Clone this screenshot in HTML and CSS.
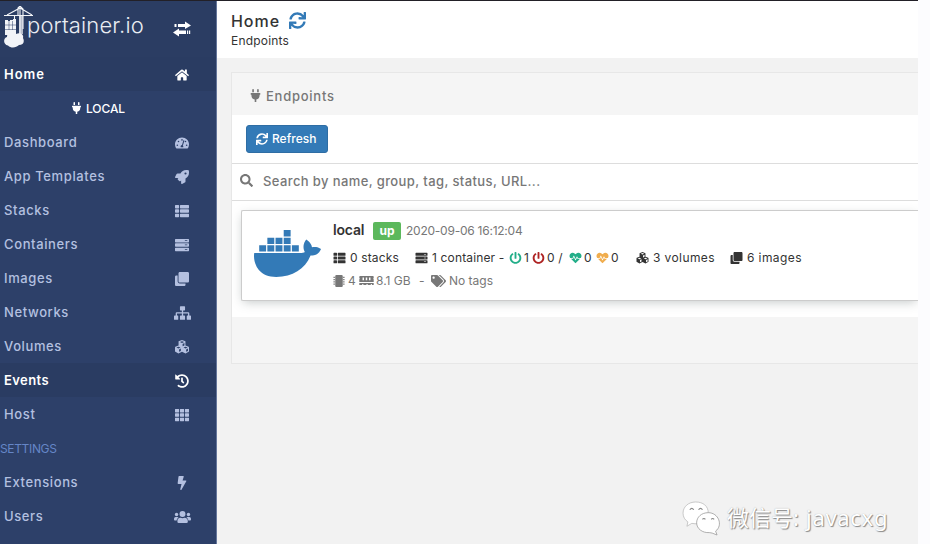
FILE: index.html
```
<!DOCTYPE html>
<html lang="en">
<head>
<meta charset="utf-8">
<title>Portainer</title>
<link rel="stylesheet" href="styles.css">
</head>
<body>
<svg class="defs" aria-hidden="true">
  <symbol id="home" viewBox="0 0 576 512"><path d="M280.37 148.26L96 300.11V464a16 16 0 0 0 16 16l112.06-.29a16 16 0 0 0 15.92-16V368a16 16 0 0 1 16-16h64a16 16 0 0 1 16 16v95.64a16 16 0 0 0 16 16.05L464 480a16 16 0 0 0 16-16V300L295.67 148.26a12.19 12.19 0 0 0-15.3 0zM571.6 251.47L488 182.56V44.05a12 12 0 0 0-12-12h-56a12 12 0 0 0-12 12v72.61L318.47 43a48 48 0 0 0-61 0L4.34 251.47a12 12 0 0 0-1.6 16.9l25.5 31A12 12 0 0 0 45.15 301l235.22-193.74a12.19 12.19 0 0 1 15.3 0L530.9 301a12 12 0 0 0 16.9-1.6l25.5-31a12 12 0 0 0-1.7-16.93z"/></symbol>
  <symbol id="plug" viewBox="0 0 384 512"><path d="M320 32a32 32 0 0 0-64 0v96h64zm48 128H16a16 16 0 0 0-16 16v32a16 16 0 0 0 16 16h16v32a160.07 160.07 0 0 0 128 156.8V512h64v-99.2A160.07 160.07 0 0 0 352 256v-32h16a16 16 0 0 0 16-16v-32a16 16 0 0 0-16-16zM128 32a32 32 0 0 0-64 0v96h64z"/></symbol>
  <symbol id="exchange" viewBox="0 0 18 16"><path d="M5 3h7V.5L18 4.500 12 8V6H5zM1.500 3h2v3h-2zM13 9.500H6V7.500L0 11.500 6 15.500V13h7zM14 9.500h1.200V13H14zM16 9.500h1.200V13H16z"/></symbol>
  <symbol id="gauge" viewBox="0 0 576 512"><path fill-rule="evenodd" d="M288 32C129 32 0 161 0 320c0 53 14 102 39 145 6 10 16 15 27 15h444c11 0 21-5 27-15 25-43 39-92 39-145C576 161 447 32 288 32zM288 96a32 32 0 1 1 0 64 32 32 0 0 1 0-64zM96 384a32 32 0 1 1 0-64 32 32 0 0 1 0 64zm48-160a32 32 0 1 1 0-64 32 32 0 0 1 0 64zM369 145c13 4 20 18 15 31l-61 184c18 20 24 45 18 72H235c-15-45 7-90 54-96l50-175c4-13 17-20 30-16zM432 224a32 32 0 1 1 0-64 32 32 0 0 1 0 64zm48 160a32 32 0 1 1 0-64 32 32 0 0 1 0 64z"/></symbol>
  <symbol id="rocket" viewBox="0 0 512 512"><path d="M505.120 19.094c-1.189-5.531-6.658-11-12.207-12.188C460.716 0 435.507 0 410.407 0 307.175 0 245.269 55.203 199.052 128H94.838c-16.348.016-35.557 11.875-42.887 26.484L2.516 253.297A28.400 28.400 0 0 0 0 264a24 24 0 0 0 24 24h103.816l-22.474 22.469c-11.366 11.361-12.996 32.258 0 45.250L156.246 406.625c11.156 11.188 32.156 13.156 45.277 0l22.475-22.469V488a24 24 0 0 0 24 24 28.560 28.560 0 0 0 10.707-2.516l98.728-49.390c14.629-7.297 26.508-26.500 26.508-42.860V312.797c72.598-46.313 128.035-108.406 128.035-211.094.1-25.203.1-50.406-6.856-82.609zM384 168a40 40 0 1 1 40-40 40 40 0 0 1-40 40z"/></symbol>
  <symbol id="list" viewBox="0 0 512 512"><path d="M24 32h102q23 0 23 23v82q0 23-23 23H24q-24 0-24-23V55q0-23 24-23zM205 32h283q24 0 24 23v82q0 23-24 23H205q-24 0-24-23V55q0-23 24-23zM24 192h102q23 0 23 23v82q0 23-23 23H24q-24 0-24-23v-82q0-23 24-23zM205 192h283q24 0 24 23v82q0 23-24 23H205q-24 0-24-23v-82q0-23 24-23zM24 352h102q23 0 23 23v82q0 23-23 23H24q-24 0-24-23v-82q0-23 24-23zM205 352h283q24 0 24 23v82q0 23-24 23H205q-24 0-24-23v-82q0-23 24-23z"/></symbol>
  <symbol id="server" viewBox="0 0 512 512"><path fill-rule="evenodd" d="M24 32h464q24 0 24 24v80q0 24-24 24H24q-24 0-24-24V56q0-24 24-24zM24 192h464q24 0 24 24v80q0 24-24 24H24q-24 0-24-24v-80q0-24 24-24zM24 352h464q24 0 24 24v80q0 24-24 24H24q-24 0-24-24v-80q0-24 24-24zM360 82h90v26h-90zM360 242h90v26h-90zM360 402h90v26h-90z"/></symbol>
  <symbol id="clone" viewBox="0 0 512 512"><path d="M464 0c26.510 0 48 21.490 48 48v288c0 26.510-21.490 48-48 48H176c-26.510 0-48-21.490-48-48V48c0-26.510 21.490-48 48-48h288M176 416c-44.112 0-80-35.888-80-80V128H48c-26.510 0-48 21.490-48 48v288c0 26.510 21.490 48 48 48h288c26.510 0 48-21.490 48-48v-48H176z"/></symbol>
  <symbol id="sitemap" viewBox="0 0 640 512"><path d="M248 0h144q24 0 24 24v112q0 24-24 24h-48v64h188q44 0 44 44v84h40q24 0 24 24v112q0 24-24 24H504q-24 0-24-24V376q0-24 24-24h24v-80H344v80h48q24 0 24 24v112q0 24-24 24H248q-24 0-24-24V376q0-24 24-24h48v-80H112v80h24q24 0 24 24v112q0 24-24 24H24q-24 0-24-24V376q0-24 24-24h40v-84q0-44 44-44h188v-64h-48q-24 0-24-24V24q0-24 24-24z"/></symbol>
  <symbol id="cubes" viewBox="0 0 512 512"><path fill-rule="evenodd" d="M256 0l126 50v150l120 50 10 20v150l-126 75-130-66-130 66L0 420V270l10-20 120-50V50zM256 42l-76 32 76 34 76-34zM278 145v85l66-30v-86zM126 244l-76 30 76 34 76-34zM148 346v88l66-34v-87zM386 244l-76 30 76 34 76-34zM408 346v88l66-34v-87z"/></symbol>
  <symbol id="history" viewBox="0 0 512 512"><path d="M504 255.531c.253 136.640-111.180 248.372-247.820 248.468-59.015.042-113.223-20.530-155.822-54.911-11.077-8.940-11.905-25.541-1.839-35.607l11.267-11.267c8.609-8.609 22.353-9.551 31.891-1.984C173.062 425.135 212.781 440 256 440c101.705 0 184-82.311 184-184 0-101.705-82.311-184-184-184-48.814 0-93.149 18.969-126.068 49.932l50.754 50.754c10.080 10.080 2.941 27.314-11.313 27.314H24c-8.837 0-16-7.163-16-16V38.627c0-14.254 17.234-21.393 27.314-11.314l49.372 49.372C129.209 34.136 189.552 8 256 8c136.810 0 247.747 110.780 248 247.531zm-180.912 78.784l9.823-12.630c8.138-10.463 6.253-25.542-4.210-33.679L288 256.349V152c0-13.255-10.745-24-24-24h-16c-13.255 0-24 10.745-24 24v135.651l65.409 50.874c10.463 8.137 25.541 6.253 33.679-4.210z"/></symbol>
  <symbol id="grid" viewBox="0 0 512 512"><path d="M16 32h117q16 0 16 16v96q0 16-16 16H16q-16 0-16-16V48q0-16 16-16zM197 32h118q16 0 16 16v96q0 16-16 16H197q-16 0-16-16V48q0-16 16-16zM379 32h117q16 0 16 16v96q0 16-16 16H379q-16 0-16-16V48q0-16 16-16zM16 192h117q16 0 16 16v96q0 16-16 16H16q-16 0-16-16v-96q0-16 16-16zM197 192h118q16 0 16 16v96q0 16-16 16H197q-16 0-16-16v-96q0-16 16-16zM379 192h117q16 0 16 16v96q0 16-16 16H379q-16 0-16-16v-96q0-16 16-16zM16 352h117q16 0 16 16v96q0 16-16 16H16q-16 0-16-16v-96q0-16 16-16zM197 352h118q16 0 16 16v96q0 16-16 16H197q-16 0-16-16v-96q0-16 16-16zM379 352h117q16 0 16 16v96q0 16-16 16H379q-16 0-16-16v-96q0-16 16-16z"/></symbol>
  <symbol id="bolt" viewBox="0 0 320 512"><path d="M296 160H180.600l42.600-129.800C227.200 15 215.700 0 200 0H56C44 0 33.800 8.900 32.200 20.800l-32 240C-1.700 275.200 9.500 288 24 288h118.700L96.600 482.500c-3.600 15.200 8 29.500 23.300 29.500 8.400 0 16.400-4.400 20.800-12l176-304c9.300-15.900-2.200-36-20.700-36z"/></symbol>
  <symbol id="users" viewBox="0 0 640 512"><circle cx="96" cy="160" r="64"/><circle cx="544" cy="160" r="64"/><circle cx="320" cy="144" r="112"/><path d="M64 256h64c18 0 34 7 45 19-40 22-68 61-74 109H32q-32 0-32-32v-32q0-64 64-64zM576 256h-64c-18 0-34 7-45 19 40 22 68 61 74 109h67q32 0 32-32v-32q0-64-64-64zM235 288h8q77 36 154 0h8c64 0 115 51 115 115v29q0 48-48 48H176q-48 0-48-48v-29c0-64 43-115 107-115z"/></symbol>
  <symbol id="sync" viewBox="0 0 512 512"><path d="M440.650 12.570l4 82.770A247.160 247.160 0 0 0 255.830 8C134.730 8 33.910 94.920 12.290 209.820A12 12 0 0 0 24.090 224h49.050a12 12 0 0 0 11.670-9.260 175.910 175.910 0 0 1 317-56.940l-101.460-4.860a12 12 0 0 0-12.570 12v47.410a12 12 0 0 0 12 12H500a12 12 0 0 0 12-12V12a12 12 0 0 0-12-12h-47.370a12 12 0 0 0-11.980 12.570zM255.830 432a175.610 175.610 0 0 1-146-77.800l101.800 4.870a12 12 0 0 0 12.570-12v-47.400a12 12 0 0 0-12-12H12a12 12 0 0 0-12 12V500a12 12 0 0 0 12 12h47.350a12 12 0 0 0 12-12.600l-4.150-82.570A247.170 247.170 0 0 0 255.830 504c121.110 0 221.930-86.920 243.550-201.820a12 12 0 0 0-11.800-14.180h-49.050a12 12 0 0 0-11.670 9.260A175.860 175.860 0 0 1 255.830 432z"/></symbol>
  <symbol id="search" viewBox="0 0 512 512"><path d="M505 442.700L405.300 343c-4.500-4.500-10.600-7-17-7H372c27.600-35.300 44-79.700 44-128C416 93.100 322.900 0 208 0S0 93.100 0 208s93.100 208 208 208c48.300 0 92.700-16.400 128-44v16.300c0 6.400 2.500 12.500 7 17l99.700 99.700c9.400 9.400 24.600 9.400 33.900 0l28.300-28.300c9.400-9.400 9.400-24.600.1-34zM208 336c-70.700 0-128-57.200-128-128 0-70.700 57.200-128 128-128 70.700 0 128 57.200 128 128 0 70.700-57.200 128-128 128z"/></symbol>
  <symbol id="docker" viewBox="0 0 640 448"><path transform="translate(0 -32)" d="M349.900 236.300h-66.100v-59.400h66.100v59.400zm0-204.300h-66.100v60.700h66.100V32zm78.200 144.800H362v59.400h66.100v-59.400zm-156.300-72.100h-66.100v60.100h66.100v-60.100zm78.100 0h-66.100v60.100h66.100v-60.100zm276.800 100c-14.400-9.700-47.600-13.200-73.100-8.400-3.300-24-16.700-44.900-41.100-63.700l-14-9.300-9.300 14c-18.400 27.800-23.400 73.600-3.700 103.800-8.700 4.700-25.800 11.100-48.400 10.700H2.400c-8.700 50.800 5.800 116.800 44 162.100 37.100 43.900 92.700 66.200 165.400 66.200 157.400 0 273.900-72.500 328.400-204.200 21.400.4 67.600.1 91.300-45.200 1.500-2.500 6.600-13.200 8.500-17.100l-13.300-8.900zm-511.100-27.900h-66v59.400h66.100v-59.400zm78.100 0h-66.100v59.400h66.100v-59.400zm78.100 0h-66.100v59.400h66.100v-59.400zm-78.100-72.100h-66.100v60.100h66.100v-60.100z"/></symbol>
  <symbol id="power" viewBox="0 0 512 512"><path d="M400 54.100c63 45 104 118.600 104 201.900 0 136.800-110.800 247.700-247.500 248C120 504.300 8.200 393 8 256.400 7.900 173.100 48.900 99.300 111.800 54.200c11.700-8.300 28-4.800 35 7.700L162.600 90c5.900 10.500 3.100 23.800-6.600 31-41.500 30.800-68 79.600-68 134.900-.1 92.300 74.500 168.100 168 168.100 91.600 0 168.600-74.200 168-169.100-.3-51.800-24.700-101.800-68.100-134-9.700-7.200-12.400-20.500-6.500-30.900l15.800-28.100c7-12.400 23.200-16.100 34.800-7.800zM296 264V24c0-13.300-10.700-24-24-24h-32c-13.300 0-24 10.700-24 24v240c0 13.300 10.700 24 24 24h32c13.300 0 24-10.700 24-24z"/></symbol>
  <symbol id="heart" viewBox="0 0 512 512"><path d="M320.200 243.800l-49.700 99.400c-6 12.100-23.400 11.700-28.900-.6l-56.900-126.300-30 71.700H60.600l182.500 186.500c7.100 7.300 18.600 7.300 25.700 0L451.400 288H342.300l-22.100-44.200zM473.700 73.900l-2.400-2.500c-51.500-52.600-135.800-52.600-187.400 0L256 100l-27.900-28.500c-51.500-52.700-135.900-52.700-187.400 0l-2.400 2.400C-10.400 123.700-12.500 203 31 256h102.400l35.900-86.200c5.400-12.900 23.600-13.200 29.400-.4l58.200 129.300 49-97.900c5.900-11.800 22.700-11.800 28.600 0l27.600 55.200H481c43.500-53 41.400-132.300-7.300-182.100z"/></symbol>
  <symbol id="chip" viewBox="0 0 512 512"><path d="M144 0h224q48 0 48 48v416q0 48-48 48H144q-48 0-48-48V48q0-48 48-48zM20 76h60v50H20zM20 172h60v50H20zM20 268h60v50H20zM20 364h60v50H20zM432 76h60v50h-60zM432 172h60v50h-60zM432 268h60v50h-60zM432 364h60v50h-60z"/></symbol>
  <symbol id="memory" viewBox="0 0 640 400"><path fill-rule="evenodd" d="M32 0h576q32 0 32 32v50q-38 28 0 76v114H0V158q38-48 0-76V32Q0 0 32 0zM144 64v130h64V64zM288 64v130h64V64zM432 64v130h64V64zM0 310h640v90h-80v-45h-50v45H370v-45h-50v45H180v-45h-50v45H0z"/></symbol>
  <symbol id="tags" viewBox="0 0 640 512"><path d="M497.941 225.941L286.059 14.059A48 48 0 0 0 252.118 0H48C21.490 0 0 21.490 0 48v204.118a48 48 0 0 0 14.059 33.941l211.882 211.882c18.744 18.745 49.136 18.746 67.882 0l204.118-204.118c18.745-18.745 18.745-49.137 0-67.882zM112 160c-26.510 0-48-21.490-48-48s21.490-48 48-48 48 21.490 48 48-21.490 48-48 48zm513.941 133.823L421.823 497.941c-18.745 18.745-49.137 18.745-67.882 0l-.36-.36L527.640 323.522c16.999-16.999 26.362-39.600 26.362-63.640s-9.362-46.641-26.362-63.640L331.397 0h48.721a48 48 0 0 1 33.941 14.059l211.882 211.882c18.745 18.745 18.745 49.137 0 67.882z"/></symbol>
</svg>
<div class="app">
  <nav class="sidebar">
    <div class="brand">
      <svg class="crane" viewBox="0 0 31 42"><path fill="none" stroke="currentColor" stroke-width="1.100" d="M0 9.500h29M3 9l13-7 12 7M14 9V2l2-2 3 3v20M16 2v32M10.500 9v5"/><path d="M15 9h4v19h-4z" fill-opacity=".7"/><path d="M1 14h3v1h2v-1h3v-1h3v16H1z"/><path fill="none" stroke="#2b3f68" stroke-width=".5" d="M1 19h11M1 23.500h11M5 15v9M8.500 15v9"/><path d="M4 39.500C-1 38.500-1 32 3 31c0-5 6-7 9-3 5-2 8 1 7 4 2 4 0 7-4 7-3 3-8 3.500-11 .5z"/></svg>
      <span class="wordmark">portainer.io</span>
      <svg class="toggle"><use href="#exchange"/></svg>
    </div>
    <a class="item on"><span class="home-label">Home</span><svg><use href="#home"/></svg></a>
    <div class="endpoint"><svg><use href="#plug"/></svg><span>LOCAL</span></div>
    <a class="item"><span>Dashboard</span><svg><use href="#gauge"/></svg></a>
    <a class="item"><span>App Templates</span><svg><use href="#rocket"/></svg></a>
    <a class="item"><span>Stacks</span><svg><use href="#list"/></svg></a>
    <a class="item"><span>Containers</span><svg><use href="#server"/></svg></a>
    <a class="item"><span>Images</span><svg><use href="#clone"/></svg></a>
    <a class="item"><span>Networks</span><svg class="wide"><use href="#sitemap"/></svg></a>
    <a class="item"><span>Volumes</span><svg><use href="#cubes"/></svg></a>
    <a class="item on"><span>Events</span><svg><use href="#history"/></svg></a>
    <a class="item"><span>Host</span><svg><use href="#grid"/></svg></a>
    <div class="section">SETTINGS</div>
    <a class="item"><span>Extensions</span><svg><use href="#bolt"/></svg></a>
    <a class="item"><span>Users</span><svg class="wide"><use href="#users"/></svg></a>
  </nav>
  <main class="content">
    <header class="header">
      <h1><span>Home</span><svg><use href="#sync"/></svg></h1>
      <p>Endpoints</p>
    </header>
    <section class="widget">
      <div class="widget-title"><svg><use href="#plug"/></svg><span>Endpoints</span></div>
      <div class="actions"><button><svg><use href="#sync"/></svg><span>Refresh</span></button></div>
      <div class="search"><svg><use href="#search"/></svg><span>Search by name, group, tag, status, URL...</span></div>
      <div class="list">
        <article class="card">
          <svg class="docker"><use href="#docker"/></svg>
          <div class="info">
            <div class="row name"><b>local</b><em>up</em><time>2020-09-06 16:12:04</time></div>
            <div class="row stats">
              <span class="stat stacks"><svg><use href="#list"/></svg><i>0 stacks</i></span>
              <span class="stat containers"><svg><use href="#server"/></svg><i>1 container -</i></span>
              <span class="stat state s1"><svg class="green"><use href="#power"/></svg><i>1</i></span>
              <span class="stat state s2"><svg class="red"><use href="#power"/></svg><i>0 /</i></span>
              <span class="stat state s3"><svg class="green"><use href="#heart"/></svg><i>0</i></span>
              <span class="stat state s4"><svg class="orange"><use href="#heart"/></svg><i>0</i></span>
              <span class="stat volumes"><svg><use href="#cubes"/></svg><i>3 volumes</i></span>
              <span class="stat images"><svg><use href="#clone"/></svg><i>6 images</i></span>
            </div>
            <div class="row meta"><svg class="chip"><use href="#chip"/></svg><span class="cpu">4</span><svg class="mem"><use href="#memory"/></svg><span class="gb">8.1 GB</span><span class="dash">-</span><svg class="tags"><use href="#tags"/></svg><span class="notags">No tags</span></div>
          </div>
        </article>
      </div>
      <div class="footer"></div>
    </section>
  </main>
  <div class="watermark">
    <svg viewBox="0 0 40 36"><g fill="#fff" stroke="#bbb" stroke-width=".8"><path d="M14 1C6.500 1 1 6 1 12.500c0 4 2 7 5 9L5 26l5-3c9 2 17-3 17-10.500S21.500 1 14 1z"/><path stroke="#999" d="M27 12c-7 0-12 4.500-12 10.500S21 33 28 32.500l3 .5 5 2-1.500-4c8-6 3-19-7.500-19z"/></g><g fill="none" stroke="#888" stroke-width="1.200"><path d="M8 9q2-3 4 0M17 9q2-3 4 0M21 19q1.500-2 3 0M30 19q1.500-2 3 0"/></g></svg>
    <span class="wx">微信号:</span><span class="id">javacxg</span>
  </div>
</div>
</body>
</html>
```
FILE: styles.css
```
* { box-sizing: border-box; }
body { margin: 0; background: #fcfcfe; font-family: Inter, "Noto Sans", sans-serif; font-size: 13px; color: #333; overflow: hidden; }
.defs { position: absolute; width: 0; height: 0; }
svg { display: block; flex: none; fill: currentColor; }
span, i, b, em, time { white-space: nowrap; font-style: normal; }
.app { position: relative; width: 918px; height: 544px; display: flex; border-top: 1px solid #222027; background: #f2f2f2; }
.sidebar { width: 217px; background: #2d4069; border-right: 1px solid #65769b; color: #b4c0e0; }
.brand { height: 56px; display: flex; padding-left: 4px; background: #2b3d63; color: #f2f4f8; }
.crane { width: 31px; height: 42px; margin-top: 5px; margin-right: -8px; }
.wordmark { font: 300 22px/48px Inter, sans-serif; letter-spacing: .15px; width: 117px; color: #e9edf3; }
.toggle { width: 18px; height: 16px; margin: 20px 0 0 29px; color: #fff; }
.item { height: 34px; display: flex; align-items: center; padding: 0 27px 0 4px; justify-content: space-between; font-weight: 500; letter-spacing: .62px; }
.item svg { width: 14px; height: 14px; position: relative; top: 1px; }
.item svg.wide { width: 17px; height: 14px; margin-right: -2px; }
.item.on { background: #2a3c62; color: #fff; font-weight: 600; letter-spacing: .4px; }
.item .home-label { letter-spacing: 1px; }
.endpoint { height: 34px; display: flex; align-items: center; gap: 4px; padding-left: 71px; color: #fff; font-weight: 500; font-size: 12px; letter-spacing: -.1px; }
.endpoint svg { width: 11px; height: 12px; }
.section { height: 34px; line-height: 35px; font-size: 12px; letter-spacing: -.35px; color: #6586c7; }
.content { flex: 1; min-width: 0; overflow: hidden; }
.header { height: 57px; background: #fff; padding: 8px 14px; }
.header h1 { margin: 0; display: flex; gap: 9px; align-items: center; height: 23px; font-weight: 500; font-size: 16px; letter-spacing: .95px; }
.header h1 svg { width: 17px; height: 17px; color: #337ab7; }
.header p { margin: 0; font-size: 12px; line-height: 17px; letter-spacing: .2px; }
.widget { margin: 14px 0 0 14px; border: 1px solid #e7e7e7; border-right: 0; height: 292px; background: #fff; }
.widget-title { height: 42px; padding: 3px 0 0 18px; display: flex; align-items: center; gap: 5px; background: #f5f5f5; color: #777; font-weight: 500; letter-spacing: .75px; }
.widget-title svg { width: 11px; height: 13px; }
.actions { height: 49px; padding: 10px 14px; border-bottom: 1px solid #ddd; }
.actions button { width: 82px; height: 28px; padding: 0 0 1px 9px; display: flex; align-items: center; gap: 4px; border: 1px solid #2e6da4; border-radius: 3px; background: #337ab7; color: #fff; font: 500 12px Inter, sans-serif; }
.actions svg { width: 12px; height: 12px; }
.search { height: 37px; padding: 0 0 3px 8px; display: flex; align-items: center; gap: 10px; border-bottom: 1px solid #ddd; color: #777; font-weight: 500; letter-spacing: .39px; }
.search svg { width: 13px; height: 13px; }
.list { height: 116px; padding: 9px 0 0 9px; overflow: hidden; }
.card { height: 91px; display: flex; border: 1px solid #ccc; border-right: 0; border-radius: 2px 0 0 2px; box-shadow: 0 3px 10px -2px rgba(120,130,130,.45); background: #fff; }
.docker { width: 67px; height: 47px; margin: 19px 12px 0 12px; color: #337ab7; }
.info { padding-top: 8px; }
.row { display: flex; align-items: center; font-size: 12px; }
.name { height: 23px; }
.name b { width: 40px; font-size: 14px; font-weight: 600; letter-spacing: -.2px; position: relative; top: -1px; }
.name em { width: 28px; height: 18px; line-height: 17px; text-align: center; border-radius: 2px; background: #5cb85c; color: #fff; font-weight: 700; margin-right: 5px; margin-top: 1px; }
.name time { color: #777; letter-spacing: -.24px; }
.stats { height: 31px; }
.stat { display: flex; gap: 4px; align-items: center; flex: none; letter-spacing: .15px; }
.stat svg { width: 13px; height: 12px; }
.stacks { width: 82px; }
.containers { width: 94px; }
.state { gap: 2px; }
.s1 { width: 23px; }
.s2 { width: 37px; }
.s3 { width: 27px; }
.s4 { width: 40px; }
.volumes { width: 94px; letter-spacing: .4px; }
.images { letter-spacing: .4px; }
.green { color: #23ae89; }
.red { color: #ae2323; }
.orange { color: #f0ad4e; }
.meta { height: 15px; color: #777; }
.chip { width: 12px; height: 12px; margin-right: 3px; }
.cpu { width: 11px; }
.mem { width: 15px; height: 9px; margin-right: 2px; }
.gb { width: 43px; }
.dash { width: 12px; }
.tags { width: 15px; height: 12px; margin-right: 3px; }
.footer { height: 46px; background: #f5f5f5; }
.watermark { position: absolute; left: 682px; top: 500px; display: flex; align-items: flex-start; color: #fff; font: 400 22px/32px "Noto Sans", "Noto Sans CJK SC", sans-serif; text-shadow: 1px 1px 1px #888, 0 0 1px #aaa; }
.watermark svg { width: 39px; height: 35px; margin-right: 6px; }
.wx { width: 79px; }
.id { letter-spacing: .7px; }
```
